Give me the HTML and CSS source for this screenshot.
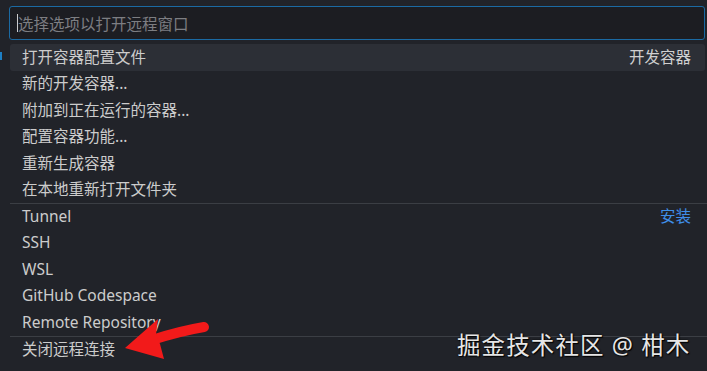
FILE: index.html
```html
<!DOCTYPE html>
<html lang="zh">
<head>
<meta charset="utf-8">
<link rel="stylesheet" href="styles.css">
</head>
<body>
<div class="edge-mark"></div>
<div class="picker">
  <div class="input"><span class="caret"></span><span class="placeholder">选择选项以打开远程窗口</span></div>
  <div class="list">
    <div class="row active"><span class="label">打开容器配置文件</span><span class="desc">开发容器</span></div>
    <div class="row"><span class="label">新的开发容器...</span></div>
    <div class="row"><span class="label">附加到正在运行的容器...</span></div>
    <div class="row"><span class="label">配置容器功能...</span></div>
    <div class="row"><span class="label">重新生成容器</span></div>
    <div class="row"><span class="label">在本地重新打开文件夹</span></div>
    <div class="row sep"><span class="label">Tunnel</span><span class="link">安装</span></div>
    <div class="row"><span class="label">SSH</span></div>
    <div class="row"><span class="label">WSL</span></div>
    <div class="row"><span class="label">GitHub Codespace</span></div>
    <div class="row"><span class="label">Remote Repository</span></div>
    <div class="row sep"><span class="label">关闭远程连接</span></div>
  </div>
</div>
<svg class="arrow" width="707" height="371" viewBox="0 0 707 371">
  <path d="M204 327 Q180 331 152 340" fill="none" stroke="#f21a1a" stroke-width="10" stroke-linecap="round"/>
  <polygon points="125,348 158,319 156,334 160,344 164,359" fill="#f21a1a"/>
</svg>
<div class="watermark">掘金技术社区 @ 柑木</div>
</body>
</html>
```
FILE: styles.css
```css
html, body {
  margin: 0;
  padding: 0;
  background: #212329;
  width: 707px;
  height: 371px;
  overflow: hidden;
  font-family: "Noto Sans", "Noto Sans CJK SC", sans-serif;
  font-size: 15.5px;
  color: #cccccc;
}
.picker {
  padding: 6px 2px 0 9px;
}
.input {
  height: 32px;
  border: 1px solid #1b6aa3;
  border-radius: 3px;
  background: #1c1d22;
  display: flex;
  align-items: center;
  padding-left: 7px;
}
.caret {
  width: 1px;
  height: 18px;
  background: #cccccc;
}
.placeholder {
  color: #7d7e82;
}
.list {
  margin-top: 4px;
  margin-left: 1px;
  margin-right: -2px;
}
.row {
  height: 26.5px;
  display: flex;
  align-items: center;
  justify-content: space-between;
  padding: 0 16px 0 12px;
  box-sizing: border-box;
  line-height: 1;
}
.row.active {
  background: #2c2f36;
  border-radius: 3px;
  margin-right: 2px;
  padding-right: 14px;
}
.row.sep {
  border-top: 1px solid #3b3e44;
  height: 26.5px;
  padding-top: 0;
}
.desc {
  color: #d0d0d0;
}
.link {
  color: #3f8fe8;
}
.watermark {
  position: absolute;
  left: 457px;
  top: 327px;
  font-size: 23.5px;
  color: #e6e6e6;
  text-shadow: 0 0 2px #000, 1px 1px 1px #000;
  letter-spacing: 1.1px;
}
.arrow {
  position: absolute;
  left: 0;
  top: 0;
  pointer-events: none;
}
.edge-mark {
  position: absolute;
  left: 0;
  top: 52px;
  width: 2px;
  height: 8px;
  background: #1d7fc4;
}
```
